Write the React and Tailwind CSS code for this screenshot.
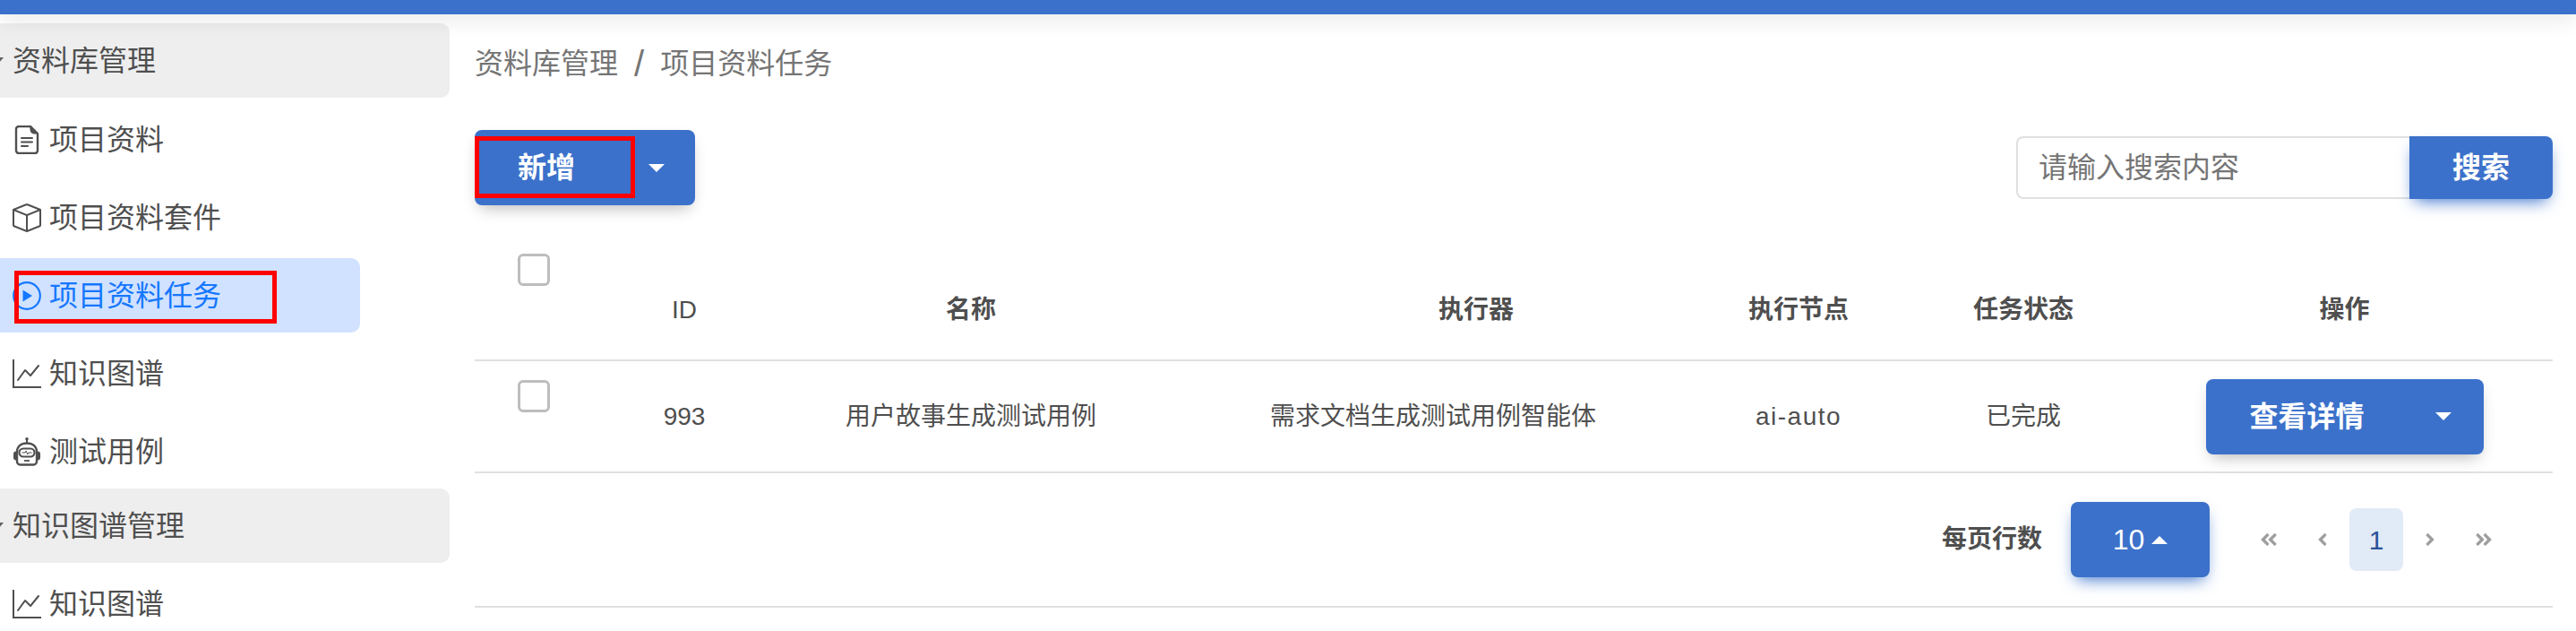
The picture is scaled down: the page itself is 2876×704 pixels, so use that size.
import React from 'react';
import { BsBox, BsGraphUp } from 'react-icons/bs';
import { FaAngleDoubleLeft, FaAngleDoubleRight, FaAngleLeft, FaAngleRight } from 'react-icons/fa';

const FileIcon = () => (
  <svg width="32" height="32" viewBox="0 0 32 32" fill="none" stroke="currentColor" strokeWidth="2.4" strokeLinejoin="round" strokeLinecap="round">
    <path d="M7 1h13l8 8v19a3 3 0 0 1-3 3H7a3 3 0 0 1-3-3V4a3 3 0 0 1 3-3z" />
    <path d="M20 1l8 8h-4a4 4 0 0 1-4-4z" fill="currentColor" strokeWidth="1" />
    <path d="M10 14h12M10 18.5h12M10 23h7" strokeWidth="2" />
  </svg>
);

const PlayIcon = () => (
  <svg width="32" height="32" viewBox="0 0 32 32" fill="none">
    <circle cx="16" cy="16" r="14.8" stroke="currentColor" strokeWidth="2.2" />
    <path d="M11.5 9.5v13L22 16z" fill="currentColor" />
  </svg>
);

const RobotIcon = () => (
  <svg width="32" height="32" viewBox="0 0 32 32" fill="none">
    <circle cx="16" cy="1.8" r="1.8" fill="currentColor" />
    <path d="M16 2v5" stroke="currentColor" strokeWidth="2" />
    <path d="M16 6.5c7 0 11 4 11 10V27a3.5 3.5 0 0 1-3.5 3.5h-15A3.5 3.5 0 0 1 5 27V16.5c0-6 4-10 11-10z" stroke="currentColor" strokeWidth="2.4" />
    <path d="M4 15.5v10a3 3 0 0 1-3-3v-4a3 3 0 0 1 3-3zM28 15.5v10a3 3 0 0 0 3-3v-4a3 3 0 0 0-3-3z" fill="currentColor" />
    <rect x="7.5" y="12.5" width="17" height="9" rx="4.5" fill="#fff" stroke="currentColor" strokeWidth="2.2" />
    <path d="M10.5 17h3.5l1.2-2 1.6 4 1.2-2h3.5" stroke="currentColor" strokeWidth="1" />
    <path d="M13 26h6" stroke="currentColor" strokeWidth="1.8" />
  </svg>
);

const Caret = ({ up, w = 18, h = 9 }) => (
  <svg width={w} height={h} viewBox="0 0 18 9" preserveAspectRatio="none" fill="#fff">
    <path d={up ? 'M9 0l9 9H0z' : 'M0 0h18L9 9z'} />
  </svg>
);

const GroupHeader = ({ label }) => (
  <div className="flex h-[83px] w-[502px] items-center rounded-r-[10px] bg-[#eeeeee]">
    <span className="ml-[-8px] mr-[10px] h-0 w-0 border-x-[6px] border-t-[7px] border-x-transparent border-t-[#616161]" />
    <span>{label}</span>
  </div>
);

const NavItem = ({ icon, label }) => (
  <div className="mt-1 flex h-[83px] items-center gap-[9px] pl-[14px]">
    {icon}
    <span>{label}</span>
  </div>
);

const Sidebar = () => (
  <div className="mt-[10px] w-[502px] shrink-0 text-[32px] text-[#4f4f4f]">
    <GroupHeader label="资料库管理" />
    <div className="h-px" />
    <NavItem icon={<FileIcon />} label="项目资料" />
    <NavItem icon={<BsBox size={32} />} label="项目资料套件" />
    {/* current page, the red box is a note drawn on the screenshot */}
    <div className="relative mt-1 flex h-[83px] w-[402px] items-center gap-[9px] rounded-r-[10px] bg-[#d0e2ff] pl-[14px] text-[#1677ff]">
      <PlayIcon />
      <span>项目资料任务</span>
      <div className="absolute left-[16px] top-[14px] h-[59px] w-[293px] border-[5px] border-[#ff0000]" />
    </div>
    <NavItem icon={<BsGraphUp size={32} />} label="知识图谱" />
    <NavItem icon={<RobotIcon />} label="测试用例" />
    <GroupHeader label="知识图谱管理" />
    <NavItem icon={<BsGraphUp size={32} />} label="知识图谱" />
  </div>
);

const columns = 'grid grid-cols-[134px_200px_541px_478px_250px_252px_465px]';

const Table = () => (
  <div className="mt-[30px] text-[28px] text-[#4f4f4f]">
    <div className={`${columns} h-[144px] border-b-2 border-[#e0e0e0] font-semibold`}>
      <div className="pl-12 pt-6">
        <div className="h-9 w-9 rounded-md border-[3px] border-[#bdbdbd]" />
      </div>
      <div className="pt-[66px] text-center font-normal">ID</div>
      <div className="pr-[101px] pt-[66px] text-center">名称</div>
      <div className="pl-2 pt-[66px] text-center">执行器</div>
      <div className="pt-[66px] text-center">执行节点</div>
      <div className="pt-[66px] text-center">任务状态</div>
      <div className="pt-[66px] text-center">操作</div>
    </div>
    <div className={`${columns} h-[125px] items-center border-b-2 border-[#e0e0e0]`}>
      <div className="self-start pl-12 pt-[21px]">
        <div className="h-9 w-9 rounded-md border-[3px] border-[#bdbdbd]" />
      </div>
      <div className="text-center">993</div>
      <div className="pr-[101px] text-center">用户故事生成测试用例</div>
      <div className="pr-[88px] text-center">需求文档生成测试用例智能体</div>
      <div className="text-center tracking-[1.5px]">ai-auto</div>
      <div className="text-center">已完成</div>
      <div className="flex justify-center">
        <button className="flex h-[84px] w-[310px] items-center justify-between rounded-lg bg-[#3b71ca] pl-[49px] pr-[36px] text-[32px] font-semibold text-white shadow-[0_8px_18px_-6px_rgba(0,0,0,0.3)]">
          <span>查看详情</span>
          <Caret />
        </button>
      </div>
    </div>
  </div>
);

const Pagination = () => (
  <div className="flex h-[150px] items-center justify-end border-b-2 border-[#e0e0e0] pr-[47px] text-[28px] text-[#4f4f4f]">
    <span className="font-semibold">每页行数</span>
    <button className="ml-8 flex h-[84px] w-[155px] items-center justify-center gap-[8px] rounded-lg bg-[#3b71ca] text-[32px] font-medium text-white shadow-[0_8px_18px_-6px_#3b71ca]">
      <span>10</span>
      <Caret up />
    </button>
    <div className="ml-[36px] flex items-center text-[#9e9e9e]">
      <span className="flex w-[60px] justify-center"><FaAngleDoubleLeft size={22} /></span>
      <span className="flex w-[60px] justify-center"><FaAngleLeft size={22} /></span>
      <span className="flex h-[70px] w-[60px] items-center justify-center rounded-lg bg-[#e1eaf7] text-[30px] text-[#2a5298]">1</span>
      <span className="flex w-[60px] justify-center"><FaAngleRight size={22} /></span>
      <span className="flex w-[60px] justify-center"><FaAngleDoubleRight size={22} /></span>
    </div>
  </div>
);

const App = () => {
  return (
    <div className="h-[704px] w-[2876px] overflow-hidden bg-white font-['Liberation_Sans','Noto_Sans_CJK_SC',sans-serif]">
      <div className="relative z-10 h-4 bg-[#3b71ca] shadow-[0_4px_24px_rgba(0,0,0,0.12)]" />
      <div className="flex">
        <Sidebar />
        <div className="ml-7 w-[2320px]">
          {/* breadcrumb */}
          <div className="mt-[31px] flex h-12 items-center text-[32px] text-[#757575]">
            <span>资料库管理</span>
            <span className="mx-[18px] text-[40px] leading-none">/</span>
            <span>项目资料任务</span>
          </div>
          {/* toolbar */}
          <div className="mt-[50px] flex items-center justify-between">
            <button className="relative flex h-[84px] w-[246px] items-center rounded-lg bg-[#3b71ca] text-[32px] font-bold text-white shadow-[0_8px_18px_-6px_rgba(0,0,0,0.3)]">
              <span className="ml-12">新增</span>
              <span className="ml-[82px]"><Caret /></span>
              <div className="absolute left-0 top-[7px] h-[69px] w-[179px] border-[5px] border-[#ff0000]" />
            </button>
            <div className="flex h-[70px] w-[599px]">
              <input
                placeholder="请输入搜索内容"
                className="w-[439px] rounded-l-lg border-2 border-r-0 border-[#e0e0e0] pl-[23px] text-[32px] outline-none placeholder:text-[#757575]"
              />
              <button className="w-[160px] rounded-r-lg bg-[#3b71ca] text-[32px] font-bold text-white shadow-[0_8px_18px_-6px_#3b71ca]">
                搜索
              </button>
            </div>
          </div>
          <Table />
          <Pagination />
        </div>
      </div>
    </div>
  );
};

export default App;
